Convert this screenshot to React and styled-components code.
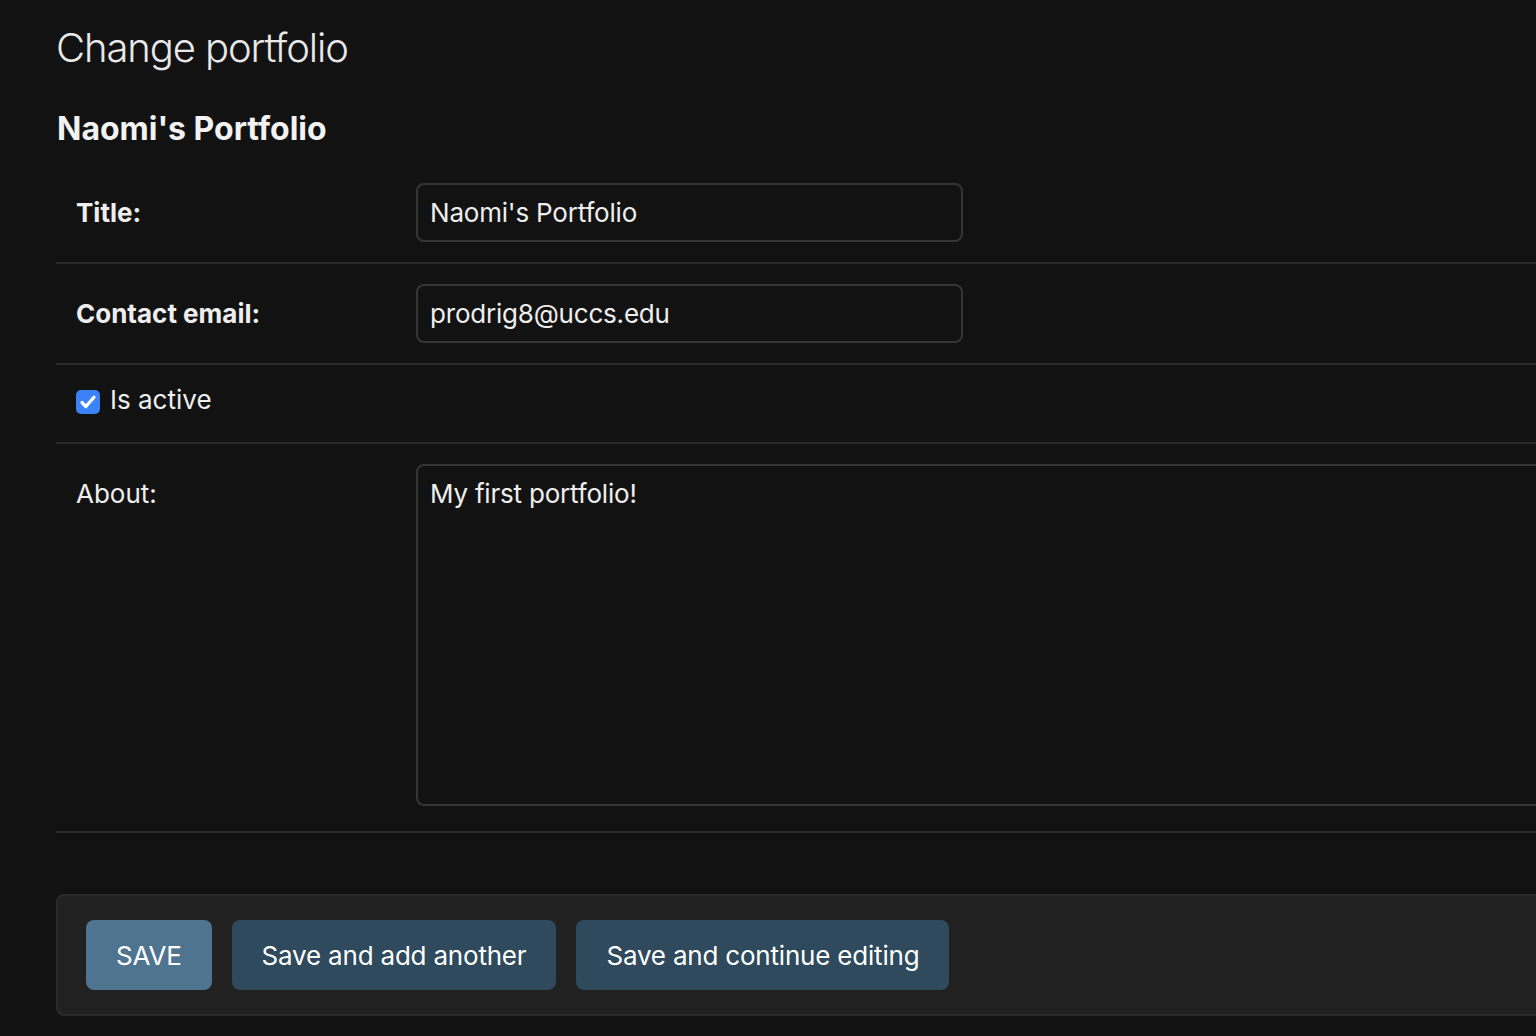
import React from 'react'
import styled, { createGlobalStyle } from 'styled-components'

const GlobalStyle = createGlobalStyle`
  html, body {
    margin: 0;
    padding: 0;
    background: #121212;
    overflow: hidden;
  }
  body {
    font-family: Inter, 'Noto Sans', sans-serif;
    color: #eeeeee;
  }
`

const Page = styled.div`
  width: 1536px;
  height: 1036px;
  padding: 24px 0 0 56px;
  box-sizing: border-box;
  overflow: hidden;
`

const Heading = styled.h1`
  margin: 0;
  font-size: 40px;
  font-weight: 300;
  line-height: 48px;
  letter-spacing: -1.1px;
  color: #e8e8e8;
`

const Subtitle = styled.h2`
  margin: 37px 0 14px 1px;
  font-size: 32px;
  font-weight: 700;
  line-height: 40px;
  color: #f2f2f2;
`

const Fieldset = styled.div`
  overflow: hidden;
`

const Row = styled.div`
  display: flex;
  align-items: ${(p) => (p.$top ? 'flex-start' : 'center')};
  padding: ${(p) => (p.$compact ? '19px 20px 27px' : '20px')};
  border-bottom: 2px solid #2a2a2a;
`

const Label = styled.label`
  width: 340px;
  flex-shrink: 0;
  font-size: 26px;
  font-weight: ${(p) => (p.$required ? 700 : 400)};
  color: #eeeeee;
  padding-top: ${(p) => (p.$top ? '14px' : '0')};
`

const Input = styled.input`
  width: 547px;
  height: 59px;
  box-sizing: border-box;
  background: #121212;
  border: 2px solid #353535;
  border-radius: 8px;
  padding: 0 12px;
  font-family: inherit;
  font-size: 26px;
  letter-spacing: -0.2px;
  color: #eeeeee;
  outline: none;
`

const TextArea = styled.textarea`
  width: 1300px;
  flex-shrink: 0;
  height: 342px;
  box-sizing: border-box;
  background: #121212;
  border: 2px solid #353535;
  border-radius: 8px;
  padding: 12px 12px;
  font-family: inherit;
  font-size: 26px;
  line-height: 32px;
  letter-spacing: -0.2px;
  color: #eeeeee;
  resize: none;
  outline: none;
  margin-bottom: 5px;
`

const CheckLabel = styled.label`
  display: flex;
  align-items: center;
  gap: 10px;
  font-size: 26px;
  color: #eeeeee;
`

const CheckBox = styled.span`
  width: 24px;
  height: 24px;
  margin-top: 5px;
  border-radius: 5px;
  background: #3b82f6;
  display: flex;
  align-items: center;
  justify-content: center;
`

const SubmitRow = styled.div`
  margin-top: 61px;
  display: flex;
  gap: 20px;
  padding: 24px 28px;
  width: 1600px;
  background: #212121;
  border: 2px solid #2a2a2a;
  border-radius: 8px;
`

const Button = styled.button`
  height: 70px;
  padding: 0 30px;
  border: none;
  border-radius: 8px;
  background: ${(p) => (p.$primary ? '#4f7490' : '#2e4a5c')};
  color: #ffffff;
  font-family: inherit;
  font-size: 26px;
  letter-spacing: -0.2px;
  text-transform: ${(p) => (p.$primary ? 'uppercase' : 'none')};
  cursor: pointer;
`

export default function App() {
  return (
    <Page>
      <GlobalStyle />
      <Heading>Change portfolio</Heading>
      <Subtitle>Naomi's Portfolio</Subtitle>
      <Fieldset>
        <Row>
          <Label $required>Title:</Label>
          <Input defaultValue="Naomi's Portfolio" />
        </Row>
        <Row>
          <Label $required>Contact email:</Label>
          <Input defaultValue="prodrig8@uccs.edu" />
        </Row>
        <Row $compact>
          <CheckLabel>
            <CheckBox>
              <svg width="20" height="20" viewBox="0 0 16 16">
                <path d="M3.2 8.4l3.1 3.2L12.8 4.2" fill="none" stroke="#fff" strokeWidth="2.6" strokeLinecap="round" strokeLinejoin="round" />
              </svg>
            </CheckBox>
            Is active
          </CheckLabel>
        </Row>
        <Row $top>
          <Label $top>About:</Label>
          <TextArea defaultValue="My first portfolio!" />
        </Row>
      </Fieldset>
      <SubmitRow>
        <Button $primary>Save</Button>
        <Button>Save and add another</Button>
        <Button>Save and continue editing</Button>
      </SubmitRow>
    </Page>
  )
}
